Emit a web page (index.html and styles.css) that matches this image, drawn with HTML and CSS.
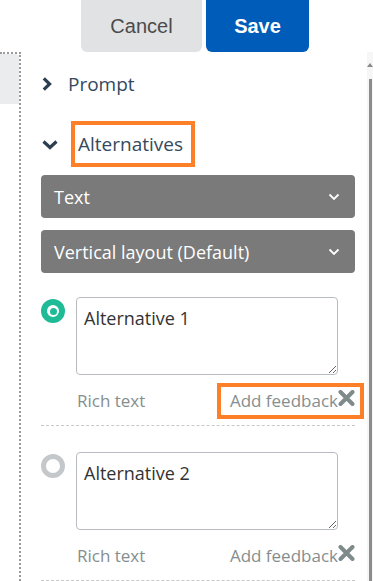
FILE: index.html
```html
<!DOCTYPE html>
<html>
	<head>
		<meta charset="utf-8">
		<title>Alternatives</title>
		<link rel="stylesheet" href="styles.css">
	</head>
	<body>
        <div class="toolbar">
            <button class="btn cancel">Cancel</button>
            <button class="btn save">Save</button>
        </div>
        <div class="workspace">
            <div class="sidebar">
                <div class="sidebar-tab"></div>
            </div>
            <div class="editor">
                <div class="section">
                    <svg class="chev-right" width="10" height="14" viewBox="0 0 10 14"><path d="M1.8 1.3 L7.6 7 L1.8 12.7" fill="none" stroke="#2c3e50" stroke-width="3.2"/></svg>
                    <span class="section-title">Prompt</span>
                </div>
                <div class="section">
                    <svg class="chev-down" width="16" height="10" viewBox="0 0 16 10"><path d="M1.5 1.5 L8 7.5 L14.5 1.5" fill="none" stroke="#2c3e50" stroke-width="3.2"/></svg>
                    <span class="section-title marked">Alternatives</span>
                </div>
                <div class="dropdown">
                    <span>Text</span>
                    <svg width="12" height="8" viewBox="0 0 12 8"><path d="M1.5 1.5 L6 6 L10.5 1.5" fill="none" stroke="#fff" stroke-width="1.8"/></svg>
                </div>
                <div class="dropdown">
                    <span>Vertical layout (Default)</span>
                    <svg width="12" height="8" viewBox="0 0 12 8"><path d="M1.5 1.5 L6 6 L10.5 1.5" fill="none" stroke="#fff" stroke-width="1.8"/></svg>
                </div>

                <div class="alt">
                    <span class="radio checked"></span>
                    <div class="alt-body">
                        <textarea class="alt-text">Alternative 1</textarea>
                        <div class="alt-foot">
                            <span class="rich">Rich text</span>
                            <span class="feedback marked-box">Add feedback<svg width="17" height="16" viewBox="0 0 17 16"><path d="M2.5 2 L14.5 14 M14.5 2 L2.5 14" stroke="#7f8a8a" stroke-width="4" stroke-linecap="round"/></svg></span>
                        </div>
                    </div>
                </div>
                <div class="alt">
                    <span class="radio"></span>
                    <div class="alt-body">
                        <textarea class="alt-text">Alternative 2</textarea>
                        <div class="alt-foot">
                            <span class="rich">Rich text</span>
                            <span class="feedback">Add feedback<svg width="17" height="16" viewBox="0 0 17 16"><path d="M2.5 2 L14.5 14 M14.5 2 L2.5 14" stroke="#7f8a8a" stroke-width="4" stroke-linecap="round"/></svg></span>
                        </div>
                    </div>
                </div>
            </div>
            <div class="scroller">
                <span class="scroll-arrow"></span>
                <span class="scroll-bar"></span>
            </div>
        </div>
	</body>
</html>
```

FILE: styles.css
```css
* {
    padding: 0;
    margin: 0;
    box-sizing: border-box;
}
html, body {
    width: 100%;
    height: 100%;
    overflow: hidden;
    background: #fff;
}
body {
    font-family: "Open Sans", "Noto Sans", sans-serif;
}
.toolbar {
    height: 52px;
    display: flex;
    gap: 4px;
    padding-left: 81px;
}
.btn {
    height: 60px;
    margin-top: -8px;
    border: none;
    border-radius: 6px;
    font-family: "Liberation Sans", Arial, sans-serif;
    font-size: 20px;
    padding-top: 8px;
}
.cancel {
    width: 121px;
    background: #e1e2e4;
    color: #4b4b4b;
}
.save {
    width: 103px;
    background: #005cb9;
    color: #fff;
    font-weight: 700;
}
.workspace {
    display: flex;
    height: 529px;
}
.sidebar {
    width: 21px;
    border-top: 2px dotted #9a9a9a;
    border-right: 2px dotted #9a9a9a;
}
.sidebar-tab {
    height: 50px;
    background: #ebecee;
    border-top-right-radius: 4px;
}
.editor {
    width: 334px;
    padding: 9px 0 0 20px;
}
.section {
    height: 46px;
    display: flex;
    align-items: center;
    color: #34495e;
    font-size: 19px;
    margin-bottom: 14px;
}
.chev-right {
    margin: 0 16px 0 1px;
}
.chev-down {
    margin: 2px 13px 0 1px;
}
.section-title {
    line-height: 38px;
}
.marked {
    border: 4px solid #fd7f28;
    padding: 0 8px 0 3px;
}
.section + .section {
    margin-bottom: 8px;
}
.dropdown {
    height: 43px;
    border-radius: 4px;
    background: #7a7a7a;
    color: #fff;
    font-size: 18px;
    display: flex;
    align-items: center;
    justify-content: space-between;
    padding: 0 15px 0 13px;
    margin-bottom: 12px;
}
.dropdown + .dropdown {
    margin-bottom: 24px;
}
.alt {
    display: flex;
    gap: 11px;
    border-bottom: 1px dashed #c8c8c8;
    margin-bottom: 26px;
}
.radio {
    flex: none;
    width: 24px;
    height: 24px;
    margin-top: 2px;
    border-radius: 50%;
    border: 5px solid #c5c8cb;
    background: #fff;
}
.radio.checked {
    border: 6px solid #1fbb97;
    display: flex;
    align-items: center;
    justify-content: center;
}
.radio.checked::after {
    content: "";
    width: 7px;
    height: 7px;
    border-radius: 50%;
    background: #1fbb97;
}
.alt-body {
    flex: 1;
}
.alt-text {
    display: block;
    width: 262px;
    height: 78px;
    border: 1px solid #b8bcc0;
    border-radius: 4px;
    padding: 8px 7px;
    font-family: "Open Sans", "Noto Sans", sans-serif;
    font-size: 18px;
    color: #333;
    resize: vertical;
    outline: none;
}
.alt-foot {
    height: 50px;
    display: flex;
    align-items: center;
    justify-content: space-between;
    font-size: 17px;
    color: #858e8e;
}
.rich {
    margin-left: 1px;
}
.feedback {
    display: flex;
    align-items: center;
    height: 36px;
    margin-top: 1px;
}
.feedback svg {
    margin-top: -6px;
}
.marked-box {
    border: 4px solid #fd7f28;
    padding: 0 5px 0 9px;
    margin-right: -9px;
}
.scroller {
    flex: 1;
    margin-left: 12px;
    background: #f6f6f6;
    display: flex;
    flex-direction: column;
    align-items: flex-end;
    padding: 11px 1px 0 0;
}
.scroll-arrow {
    width: 0;
    height: 0;
    border-left: 3px solid transparent;
    border-right: 3px solid transparent;
    border-bottom: 4px solid #8a8a8a;
    margin-right: -1px;
}
.scroll-bar {
    width: 3px;
    flex: 1;
    margin-top: 12px;
    background: #8c8c8c;
}
```
